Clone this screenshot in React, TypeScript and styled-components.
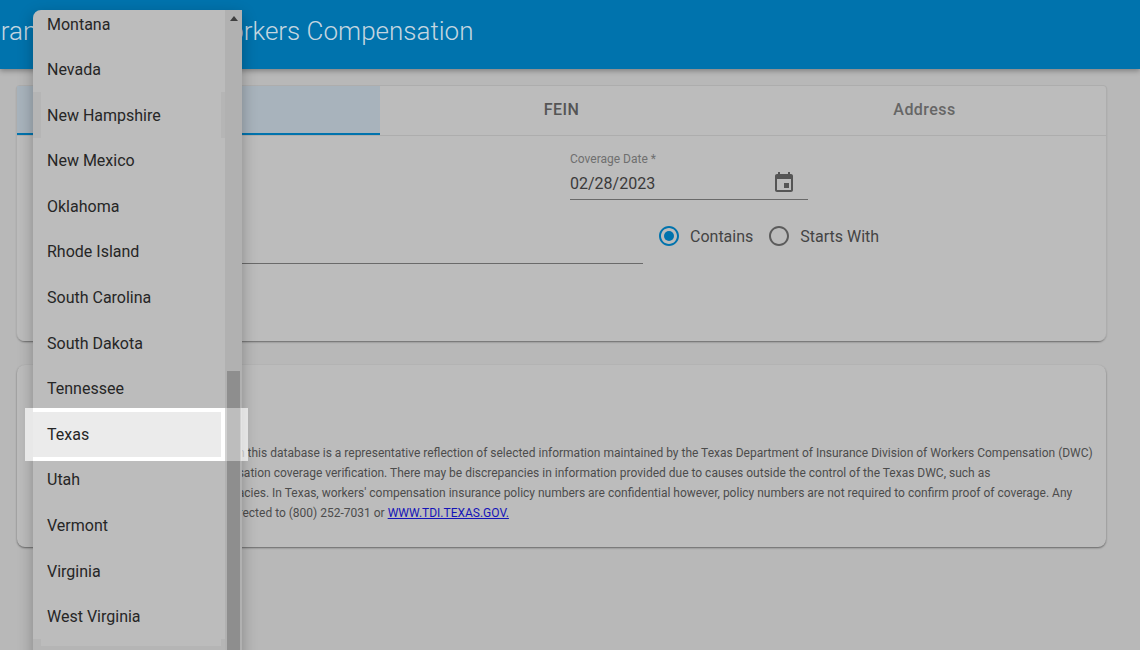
import React from "react";
import styled, { createGlobalStyle } from "styled-components";

const GlobalStyle = createGlobalStyle`
    html, body {
        margin: 0;
        padding: 0;
        height: 650px;
        overflow: hidden;
        background: #b8b8b8;
        font-family: Roboto, "Liberation Sans", sans-serif;
    }
`;

const states = [
    "Montana",
    "Nevada",
    "New Hampshire",
    "New Mexico",
    "Oklahoma",
    "Rhode Island",
    "South Carolina",
    "South Dakota",
    "Tennessee",
    "Texas",
    "Utah",
    "Vermont",
    "Virginia",
    "West Virginia",
];

const App: React.FC = () => {
    return (
        <Page>
            <GlobalStyle />
            <Header>
                <Title>Insurance Coverage &amp; Workers Compensation</Title>
            </Header>

            <Main>
                <SearchCard>
                    <Tabs>
                        <Tab $active>Name</Tab>
                        <Tab>FEIN</Tab>
                        <Tab $muted>Address</Tab>
                    </Tabs>
                    <Form>
                        <TopRow>
                            <Field>
                                <FieldLabel>State *</FieldLabel>
                                <FieldValue>Texas</FieldValue>
                            </Field>
                            <Field>
                                <FieldLabel>Coverage Date *</FieldLabel>
                                <FieldValue>
                                    02/28/2023
                                    <CalendarIcon viewBox="0 0 24 24">
                                        <path d="M17 12h-5v5h5v-5zM16 1v2H8V1H6v2H5c-1.11 0-1.99.9-1.99 2L3 19c0 1.1.89 2 2 2h14c1.1 0 2-.9 2-2V5c0-1.1-.9-2-2-2h-1V1h-2zm3 18H5V8h14v11z" />
                                    </CalendarIcon>
                                </FieldValue>
                            </Field>
                        </TopRow>
                        <NameRow>
                            <Field>
                                <FieldLabel>Employer Name *</FieldLabel>
                                <FieldValue />
                            </Field>
                            <RadioGroup>
                                <RadioOption>
                                    <RadioIcon viewBox="0 0 24 24" $checked>
                                        <path d="M12 2C6.48 2 2 6.48 2 12s4.48 10 10 10 10-4.48 10-10S17.52 2 12 2zm0 18c-4.42 0-8-3.58-8-8s3.58-8 8-8 8 3.58 8 8-3.58 8-8 8z" />
                                        <circle cx="12" cy="12" r="5" />
                                    </RadioIcon>
                                    Contains
                                </RadioOption>
                                <RadioOption>
                                    <RadioIcon viewBox="0 0 24 24">
                                        <path d="M12 2C6.48 2 2 6.48 2 12s4.48 10 10 10 10-4.48 10-10S17.52 2 12 2zm0 18c-4.42 0-8-3.58-8-8s3.58-8 8-8 8 3.58 8 8-3.58 8-8 8z" />
                                    </RadioIcon>
                                    Starts With
                                </RadioOption>
                            </RadioGroup>
                        </NameRow>
                    </Form>
                </SearchCard>

                <NoticeCard>
                    <NoticeTitle>Disclaimer</NoticeTitle>
                    <NoticeLine>
                        The coverage information as updated in this database is a representative reflection of selected information maintained by the Texas Department of Insurance Division of Workers Compensation (DWC)
                    </NoticeLine>
                    <NoticeLine>
                        Only for purposes on workers' compensation coverage verification. There may be discrepancies in information provided due to causes outside the control of the Texas DWC, such as
                    </NoticeLine>
                    <NoticeLine>
                        reporting delays or other claim inaccuracies. In Texas, workers' compensation insurance policy numbers are confidential however, policy numbers are not required to confirm proof of coverage. Any
                    </NoticeLine>
                    <NoticeLine>
                        questions about this data, should be directed to (800) 252-7031 or <NoticeLink href="#">WWW.TDI.TEXAS.GOV.</NoticeLink>
                    </NoticeLine>
                </NoticeCard>
            </Main>

            <Menu>
                <Spotlight>
                    <SpotlightEdge />
                    <SpotlightRow />
                    <SpotlightTrack />
                    <SpotlightOuter />
                </Spotlight>
                <MenuList>
                    {states.map((name) => (
                        <MenuItem key={name} $banded={name === "New Hampshire"}>
                            {name}
                        </MenuItem>
                    ))}
                    <MenuItemTail />
                </MenuList>
                <ScrollTrack>
                    <ScrollArrow />
                    <ScrollThumb />
                </ScrollTrack>
            </Menu>
        </Page>
    );
};

const Page = styled.div`
    position: relative;
    width: 1140px;
    height: 650px;
    overflow: hidden;
    background: #b8b8b8;
`;

const Header = styled.header`
    height: 69px;
    display: flex;
    align-items: center;
    background: #0073ad;
    box-shadow: 0 2px 5px rgba(0, 0, 0, 0.3);
`;

const Title = styled.h1`
    margin: -7px 0 0 -48px;
    font-size: 26px;
    font-weight: 300;
    color: #c4d6e0;
    white-space: nowrap;
`;

const Main = styled.main`
    display: flex;
    flex-direction: column;
    gap: 24px;
    padding: 17px 34px 0 17px;
`;

const Card = styled.section`
    background: #bcbcbc;
    border-radius: 0 0 8px 8px;
    box-shadow: 0 1px 2px rgba(0, 0, 0, 0.45);
`;

const SearchCard = styled(Card)`
    height: 255px;
    border-radius: 3px 3px 8px 8px;
    box-shadow: 0 -1px 0 #adadad, -1px 0 0 #adadad, 1px 0 0 #adadad, 0 1px 2px rgba(0, 0, 0, 0.45);
`;

const Tabs = styled.div`
    display: grid;
    grid-template-columns: repeat(3, 1fr);
    height: 49px;
    border-bottom: 1px solid #adadad;
`;

const Tab = styled.div<{ $active?: boolean; $muted?: boolean }>`
    display: flex;
    align-items: center;
    justify-content: center;
    padding-bottom: 2px;
    font-size: 16px;
    font-weight: 500;
    letter-spacing: 0.45px;
    color: ${(p) => (p.$muted ? "#666666" : "#555555")};
    background: ${(p) => (p.$active ? "#a8b3bc" : "transparent")};
    border-bottom: ${(p) => (p.$active ? "2px solid #0073ad" : "0")};
`;

const Form = styled.div`
    display: flex;
    flex-direction: column;
    gap: 16px;
    padding: 16px 0 0 17px;
`;

const TopRow = styled.div`
    display: grid;
    grid-template-columns: 190px 238px;
    column-gap: 346px;
`;

const NameRow = styled.div`
    display: grid;
    grid-template-columns: 609px auto;
    column-gap: 14px;
`;

const Field = styled.div`
    display: flex;
    flex-direction: column;
`;

const FieldLabel = styled.label`
    font-size: 12px;
    line-height: 14px;
    color: #6f6f6f;
`;

const FieldValue = styled.div`
    display: flex;
    align-items: center;
    justify-content: space-between;
    height: 32px;
    padding-top: 1px;
    font-size: 16px;
    color: #3a3a3a;
    border-bottom: 1px solid #6a6a6a;
`;

const CalendarIcon = styled.svg`
    width: 24px;
    height: 24px;
    margin-right: 12px;
    fill: #555555;
`;

const RadioGroup = styled.div`
    display: flex;
    align-items: center;
    gap: 14px;
    margin-top: -8px;
    font-size: 16px;
    color: #444444;
`;

const RadioOption = styled.div`
    display: flex;
    align-items: center;
    gap: 9px;
`;

const RadioIcon = styled.svg<{ $checked?: boolean }>`
    width: 24px;
    height: 24px;
    fill: ${(p) => (p.$checked ? "#0073ad" : "#5c5c5c")};
`;

const NoticeCard = styled(Card)`
    height: 182px;
    box-sizing: border-box;
    padding: 16px 0 0 16px;
    border-radius: 8px;
`;

const NoticeTitle = styled.h2`
    margin: 0 0 34px;
    font-size: 20px;
    line-height: 28px;
    font-weight: 500;
    color: #444444;
`;

const NoticeLine = styled.p`
    margin: 0;
    font-size: 12px;
    line-height: 20px;
    color: #4c4c4c;
    white-space: nowrap;
`;

const NoticeLink = styled.a`
    color: #1414b8;
`;

const Menu = styled.div`
    position: absolute;
    left: 33px;
    top: 10px;
    width: 209px;
    height: 660px;
    background: #bcbcbc;
    border-radius: 8px 4px 0 0;
    box-shadow: 0 5px 15px rgba(0, 0, 0, 0.28);
`;

const MenuList = styled.ul`
    position: relative;
    z-index: 2;
    height: 640px;
    margin: 0;
    padding: 0;
    width: 192px;
    list-style: none;
    overflow: hidden;
    border-radius: 8px 0 0 0;
`;

const MenuItem = styled.li<{ $banded?: boolean }>`
    display: flex;
    align-items: center;
    height: 45.6px;
    padding-left: 14px;
    font-size: 16px;
    color: #262626;
    box-sizing: border-box;
    position: relative;
    top: -8.8px;
    ${(p) =>
        p.$banded
            ? `
        padding-left: 6px;
        border-left: 8px solid #b5b5b5;
        border-right: 4px solid #b5b5b5;
    `
            : ""}
`;

const MenuItemTail = styled.li`
    height: 11px;
    position: relative;
    top: -9.8px;
    box-sizing: border-box;
    border-left: 8px solid #b5b5b5;
    border-right: 4px solid #b5b5b5;
    border-bottom: 4px solid #b5b5b5;
`;

const Spotlight = styled.div`
    position: absolute;
    z-index: 1;
    left: -8px;
    top: 398px;
    width: 223px;
    height: 53px;
    display: flex;
`;

const SpotlightEdge = styled.div`
    width: 8px;
    background: #e8e8e8;
`;

const SpotlightRow = styled.div`
    width: 192px;
    background: #ebebeb;
    border: 4px solid #ffffff;
    border-left: 0;
    box-sizing: border-box;
`;

const SpotlightTrack = styled.div`
    width: 16px;
    background: rgba(255, 255, 255, 0.42);
`;

const SpotlightOuter = styled.div`
    width: 7px;
    background: rgba(255, 255, 255, 0.65);
`;

const ScrollTrack = styled.div`
    position: absolute;
    right: 0;
    top: 0;
    bottom: 0;
    width: 17px;
    background: #b1b1b1;
`;

const ScrollArrow = styled.div`
    position: absolute;
    left: 5px;
    top: 6px;
    width: 0;
    height: 0;
    border-left: 4px solid transparent;
    border-right: 4px solid transparent;
    border-bottom: 5px solid #3f3f3f;
`;

const ScrollThumb = styled.div`
    position: absolute;
    left: 2px;
    right: 2px;
    top: 361px;
    bottom: 0;
    background: #8e8e8e;
`;

export default App;
